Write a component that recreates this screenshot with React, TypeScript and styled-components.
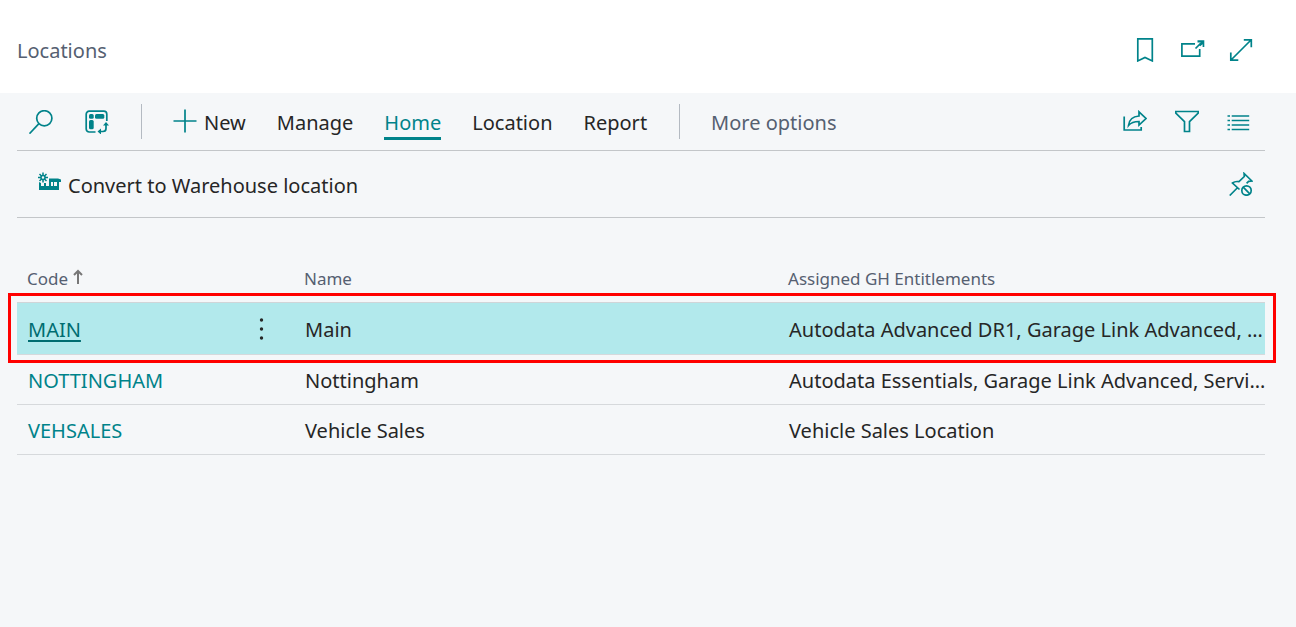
import React from "react";
import styled, { createGlobalStyle, css } from "styled-components";

const teal = "#00838a";
const ink = "#262626";
const muted = "#556071";

const GlobalStyle = createGlobalStyle`
  *, *::before, *::after { box-sizing: border-box; }
  html { background: #f5f7f9; }
  body {
    margin: 0;
    color: ${ink};
    font: 20px/28px "Noto Sans", "Open Sans", sans-serif;
  }
`;

const PageHeader = styled.header`
  display: flex;
  align-items: center;
  justify-content: space-between;
  height: 93px;
  padding: 6px 43px 0 17px;
  background: #ffffff;
`;

const Title = styled.h1`
  margin: 0;
  padding-top: 2px;
  color: ${muted};
  font-size: 20px;
  font-weight: 400;
  line-height: 28px;
`;

const IconGroup = styled.div<{ $gap: number }>`
  display: flex;
  align-items: center;
  gap: ${(p) => p.$gap}px;
`;

const IconButton = styled.button`
  display: block;
  padding: 0;
  border: 0;
  background: none;
  color: ${teal};
  cursor: pointer;
`;

const Glyph = styled.svg`
  display: block;
  flex: none;
  width: 24px;
  height: 24px;
  fill: none;
  stroke: currentColor;
  stroke-width: 1.7;
`;

const Content = styled.main`
  padding: 0 31px 24px 17px;
`;

const Bar = styled.div<{ $height: number }>`
  display: flex;
  align-items: center;
  justify-content: space-between;
  height: ${(p) => p.$height}px;
  border-bottom: 1px solid #c3c6c9;
`;

const Toolbar = styled(Bar)`
  padding: 0 14px 0 12px;
`;

const ActionBar = styled(Bar)`
  padding: 0 12px 0 20px;
`;

const Nav = styled.nav`
  display: flex;
  align-items: center;
`;

const Separator = styled.span`
  width: 1px;
  height: 35px;
  margin: 0 31px 0 32px;
  background: #b4bac2;
`;

const Tabs = styled.div`
  display: flex;
  gap: 31px;
`;

const TextButton = styled.button<{ $tone?: "active" | "muted" }>`
  display: flex;
  align-items: center;
  gap: 7px;
  padding: 6px 0 0;
  border: 0;
  border-bottom: 3px solid transparent;
  background: none;
  color: ${ink};
  font: inherit;
  line-height: 26px;
  white-space: nowrap;
  cursor: pointer;
  svg { margin-bottom: 4px; color: ${teal}; }
  ${(p) => p.$tone === "muted" && css`color: ${muted};`}
  ${(p) => p.$tone === "active" && css`color: ${teal}; border-color: ${teal};`}
`;

const Table = styled.table`
  width: 100%;
  margin-top: 43px;
  border-collapse: separate;
  border-spacing: 0;
  table-layout: fixed;
`;

const HeadCell = styled.th`
  height: 41px;
  padding: 4px 0 9px 9px;
  color: ${muted};
  font-size: 17px;
  font-weight: 400;
  line-height: 28px;
  text-align: left;
  white-space: nowrap;
  &:first-child { padding-left: 10px; }
  svg { display: inline-block; width: 10px; height: 16px; margin-left: 5px; color: #777777; }
`;

const Cell = styled.td`
  height: 50px;
  padding: 3px 0 0 10px;
  border-bottom: 1px solid #d6d9dc;
  white-space: nowrap;
  &:first-child { padding-left: 11px; }
`;

const Row = styled.tr<{ $selected?: boolean }>`
  ${(p) => p.$selected && css`
    position: relative;
    ${Cell} {
      height: 53px;
      border-top: 1px solid #d0d5d8;
      background: #b2e9ec;
    }
  `}
`;

const Callout = styled.span`
  position: absolute;
  inset: -9px -11px -8px -9px;
  border: 3px solid #ff0000;
  pointer-events: none;
`;

const CodeLink = styled.a<{ $selected?: boolean }>`
  color: ${(p) => (p.$selected ? "#006d71" : teal)};
  text-decoration: ${(p) => (p.$selected ? "underline" : "none")};
  text-decoration-thickness: 2px;
  text-underline-offset: 3px;
`;

const MenuButton = styled(IconButton)`
  margin: 0 0 2px 12px;
  color: ${ink};
`;

const SearchIcon = () => (
  <Glyph viewBox="0 0 24 24"><circle cx="15.3" cy="8.3" r="7.6" /><path d="M9.7 13.9.5 23.6" /></Glyph>
);

const AnalyseIcon = () => (
  <Glyph viewBox="0 0 24 24">
    <path d="M10.500 22H4.200a3 3 0 0 1-3-3V4.200a3 3 0 0 1 3-3h14.600a3 3 0 0 1 3 3V11" />
    <g fill="currentColor" stroke="none">
      <rect x="4" y="4" width="4.700" height="4.700" rx="1.500" />
      <rect x="10" y="4" width="9.300" height="4.700" rx="1.500" />
      <rect x="4" y="10" width="4.700" height="9.300" rx="1.500" />
      <path d="m21 12 3 3.500h-6zM12.500 21.500l3.500-3v6z" />
    </g>
    <path d="M21 15v3.500a3 3 0 0 1-3 3h-3" />
  </Glyph>
);

const PlusIcon = () => <Glyph viewBox="0 0 24 24"><path d="M12 .5v23M.5 12h23" /></Glyph>;
const BookmarkIcon = () => <Glyph viewBox="0 0 24 24"><path d="M4.800.9h14.500v22L12 19.500 4.800 22.900z" /></Glyph>;

const PopOutIcon = () => (
  <Glyph viewBox="0 0 24 24">
    <path d="M14 5.900H.9v12.300h17.800v-7.200M14.500 10.500 20 5" />
    <path fill="currentColor" stroke="none" d="M16.500 2.300h6.800v6.800h-1.700V6.200l-2.400 2-1.500-1.500 2.200-2.200h-3.400z" />
  </Glyph>
);

const ExpandIcon = () => (
  <Glyph viewBox="0 0 24 24"><path d="M2 22 22 2M14.800 1.800h7.500v7.500M1.800 14.500v7.700h7.500" /></Glyph>
);

const ShareIcon = () => (
  <Glyph viewBox="0 0 24 24">
    <path d="M1.200 6.500v13.500h17V17" />
    <path d="M16 1.800 23 8.500 16 15v-3.500C11 11.500 8 12.500 5.500 15.500 6 10 9.500 6.500 16 6z" />
  </Glyph>
);

const FilterIcon = () => (
  <Glyph viewBox="0 0 24 24"><path d="M.8 1.500h22.400V3l-8.700 8.700v9.800h-5v-9.800L.8 3z" /></Glyph>
);

const ListIcon = () => (
  <Glyph viewBox="0 0 24 24"><path d="M.5 6h2.500m1.700 0h17.500M.5 10.500h2.500m1.700 0h17.500M.5 15h2.500m1.700 0h17.500M.5 19.500h2.500m1.700 0h17.500" /></Glyph>
);

const UnpinIcon = () => (
  <Glyph viewBox="0 0 24 24">
    <path d="M.7 23.500 8.200 16M10.500 17.500 3.500 11c2-1.500 4-1.800 6.500-1.300L15.300 4.500l-.2-3 7.800 7.500-3.300.3-2 2" />
    <circle cx="17.500" cy="18.500" r="4.700" /><path d="m14.200 15.200 6.600 6.600" />
  </Glyph>
);

const WarehouseIcon = () => (
  <Glyph viewBox="0 0 24 24">
    <path strokeWidth="1.500" d="M6 .5v10M1 5.500h10M2.500 2l7 7M9.500 2l-7 7" />
    <circle cx="6" cy="5.500" r="2" strokeWidth="1.500" fill="#f5f7f9" />
    <path fill="currentColor" stroke="none" d="M12 6.500h9l3 1V10H22v8H2V10l2 1v3h3v-3h2v3h3v-4h2v4h2v-4h1v4h3v-4h-8z" />
  </Glyph>
);

const SortIcon = () => (
  <Glyph viewBox="0 0 10 16" aria-label="Sorted ascending"><path strokeWidth="2" d="M5 15V2M1 6l4-4 4 4" /></Glyph>
);

const MoreIcon = () => (
  <Glyph viewBox="0 0 24 24">
    <g fill="currentColor" stroke="none"><circle cx="12.500" cy="3" r="1.700" /><circle cx="12.500" cy="12" r="1.700" /><circle cx="12.500" cy="21" r="1.700" /></g>
  </Glyph>
);

const tabs = ["Manage", "Home", "Location", "Report"];

const locations = [
  { code: "MAIN", name: "Main", entitlements: "Autodata Advanced DR1, Garage Link Advanced, …" },
  { code: "NOTTINGHAM", name: "Nottingham", entitlements: "Autodata Essentials, Garage Link Advanced, Servi…" },
  { code: "VEHSALES", name: "Vehicle Sales", entitlements: "Vehicle Sales Location" },
];

export default function App() {
  return (
    <>
      <GlobalStyle />
      <PageHeader>
        <Title>Locations</Title>
        <IconGroup $gap={24}>
          <IconButton aria-label="Bookmark"><BookmarkIcon /></IconButton>
          <IconButton aria-label="Open in new window"><PopOutIcon /></IconButton>
          <IconButton aria-label="Expand"><ExpandIcon /></IconButton>
        </IconGroup>
      </PageHeader>
      <Content>
        <Toolbar $height={58}>
          <Nav>
            <IconGroup $gap={32}>
              <IconButton aria-label="Search"><SearchIcon /></IconButton>
              <IconButton aria-label="Analyse"><AnalyseIcon /></IconButton>
            </IconGroup>
            <Separator />
            <Tabs>
              <TextButton><PlusIcon />New</TextButton>
              {tabs.map((tab) => (
                <TextButton key={tab} $tone={tab === "Home" ? "active" : undefined}>{tab}</TextButton>
              ))}
            </Tabs>
            <Separator />
            <TextButton $tone="muted">More options</TextButton>
          </Nav>
          <IconGroup $gap={28}>
            <IconButton aria-label="Share"><ShareIcon /></IconButton>
            <IconButton aria-label="Filter"><FilterIcon /></IconButton>
            <IconButton aria-label="Show as list"><ListIcon /></IconButton>
          </IconGroup>
        </Toolbar>
        <ActionBar $height={67}>
          <TextButton><WarehouseIcon />Convert to Warehouse location</TextButton>
          <IconButton aria-label="Unpin"><UnpinIcon /></IconButton>
        </ActionBar>
        <Table>
          <colgroup>
            <col style={{ width: 210 }} />
            <col style={{ width: 68 }} />
            <col style={{ width: 484 }} />
            <col />
          </colgroup>
          <thead>
            <tr>
              <HeadCell scope="col" colSpan={2}>Code<SortIcon /></HeadCell>
              <HeadCell scope="col">Name</HeadCell>
              <HeadCell scope="col">Assigned GH Entitlements</HeadCell>
            </tr>
          </thead>
          <tbody>
            {locations.map((item, index) => {
              const selected = index === 0;
              return (
                <Row key={item.code} $selected={selected}>
                  <Cell><CodeLink href="#" $selected={selected}>{item.code}</CodeLink></Cell>
                  <Cell>
                    {selected && <MenuButton aria-label="More actions"><MoreIcon /></MenuButton>}
                    {selected && <Callout />}
                  </Cell>
                  <Cell>{item.name}</Cell>
                  <Cell>{item.entitlements}</Cell>
                </Row>
              );
            })}
          </tbody>
        </Table>
      </Content>
    </>
  );
}
